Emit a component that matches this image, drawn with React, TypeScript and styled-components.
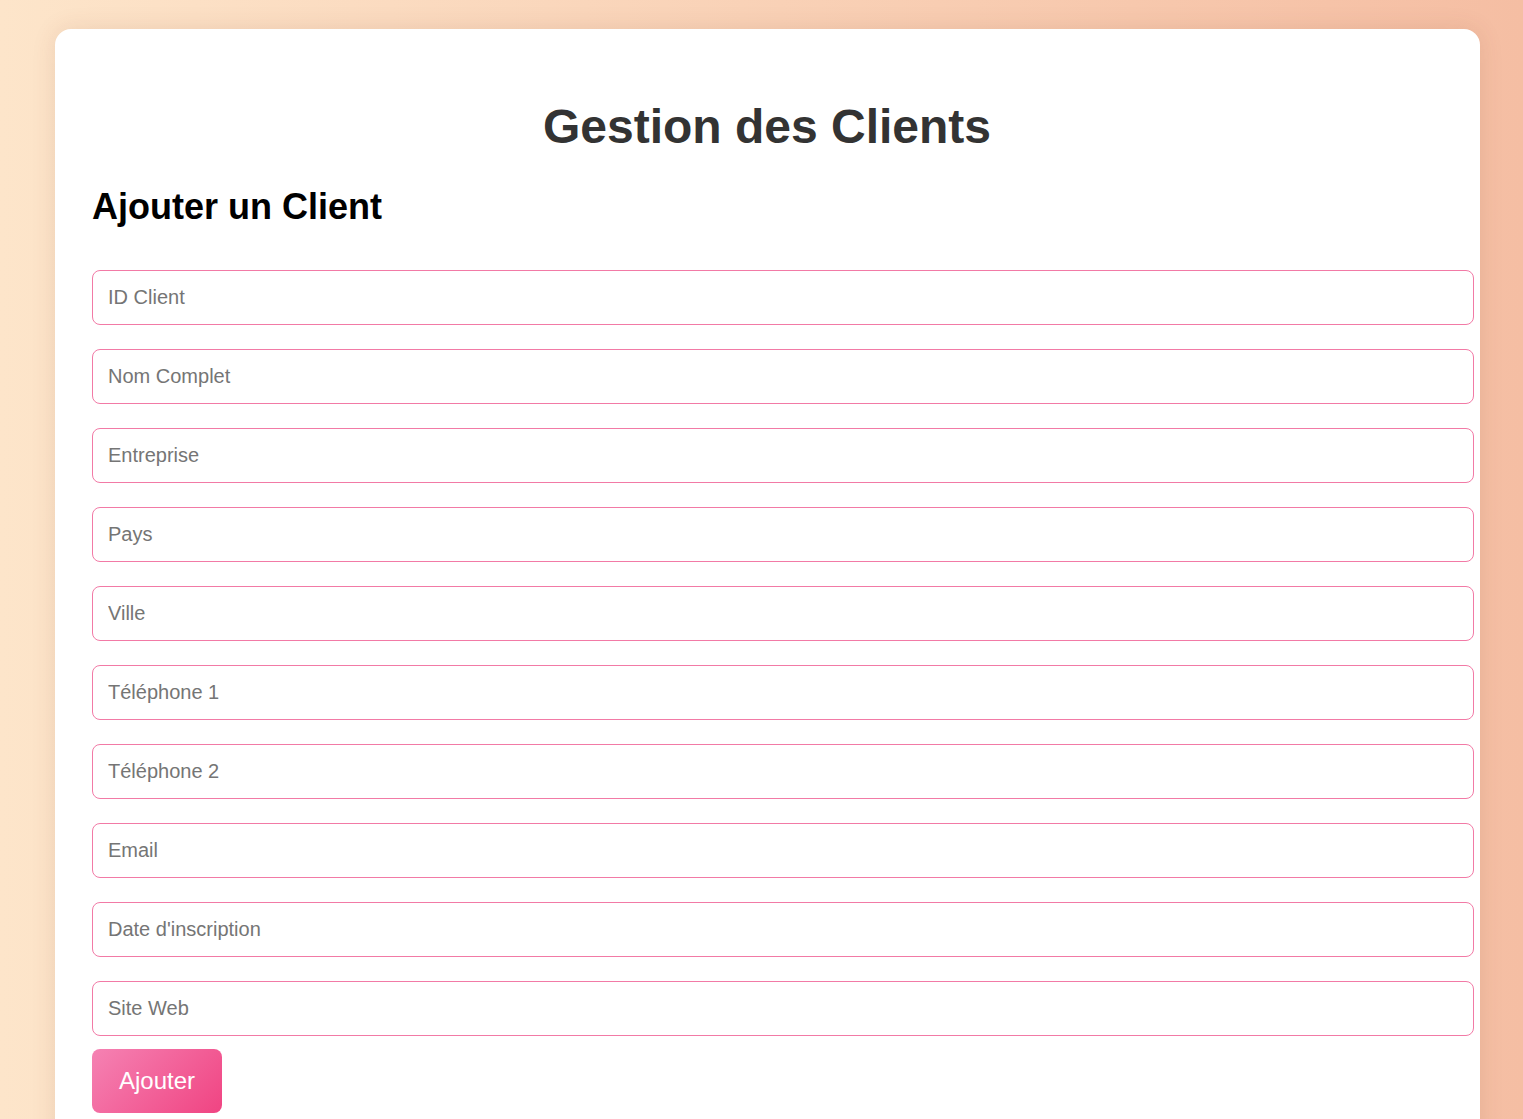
import React from 'react';
import styled, { createGlobalStyle } from 'styled-components';

const fields = [
  'ID Client',
  'Nom Complet',
  'Entreprise',
  'Pays',
  'Ville',
  'Téléphone 1',
  'Téléphone 2',
  'Email',
  "Date d'inscription",
  'Site Web',
];

const GlobalStyle = createGlobalStyle`
  html, body {
    margin: 0;
    min-height: 100%;
  }
  body {
    font-family: "Liberation Sans", Arial, sans-serif;
    background: linear-gradient(to right, #fde5ca, #f5bea3);
    min-height: 100vh;
  }
`;

const Page = styled.div`
  padding: 29px 43px 0 55px;
`;

const Card = styled.div`
  background: #fff;
  border-radius: 16px;
  padding: 38px 38px 40px 37px;
  box-shadow: 0 0 24px rgba(120, 60, 30, 0.12);
`;

const Title = styled.h1`
  margin: 32px 0;
  text-align: center;
  font-size: 48px;
  color: #333;
`;

const SectionTitle = styled.h2`
  margin: 0 0 42px;
  font-size: 36px;
  color: #000;
`;

const Form = styled.form`
  display: flex;
  flex-direction: column;
  align-items: flex-start;
`;

const Input = styled.input`
  display: block;
  width: 100%;
  box-sizing: content-box;
  padding: 15px;
  margin-bottom: 24px;
  font-family: inherit;
  font-size: 20px;
  border: 1px solid #f27aa6;
  border-radius: 8px;
  outline: none;
  color: #333;

  &::placeholder {
    color: #757575;
  }

  &:last-of-type {
    margin-bottom: 13px;
  }
`;

const Button = styled.button`
  padding: 18px 27px;
  font-family: inherit;
  font-size: 24px;
  color: #fff;
  border: none;
  border-radius: 8px;
  background: linear-gradient(135deg, #f582b3, #f04482);
  cursor: pointer;
`;

export default function App() {
  return (
    <>
      <GlobalStyle />
      <Page>
        <Card>
          <Title>Gestion des Clients</Title>
          <SectionTitle>Ajouter un Client</SectionTitle>
          <Form onSubmit={(e) => e.preventDefault()}>
            {fields.map((f) => (
              <Input key={f} placeholder={f} />
            ))}
            <Button type="submit">Ajouter</Button>
          </Form>
        </Card>
      </Page>
    </>
  );
}
